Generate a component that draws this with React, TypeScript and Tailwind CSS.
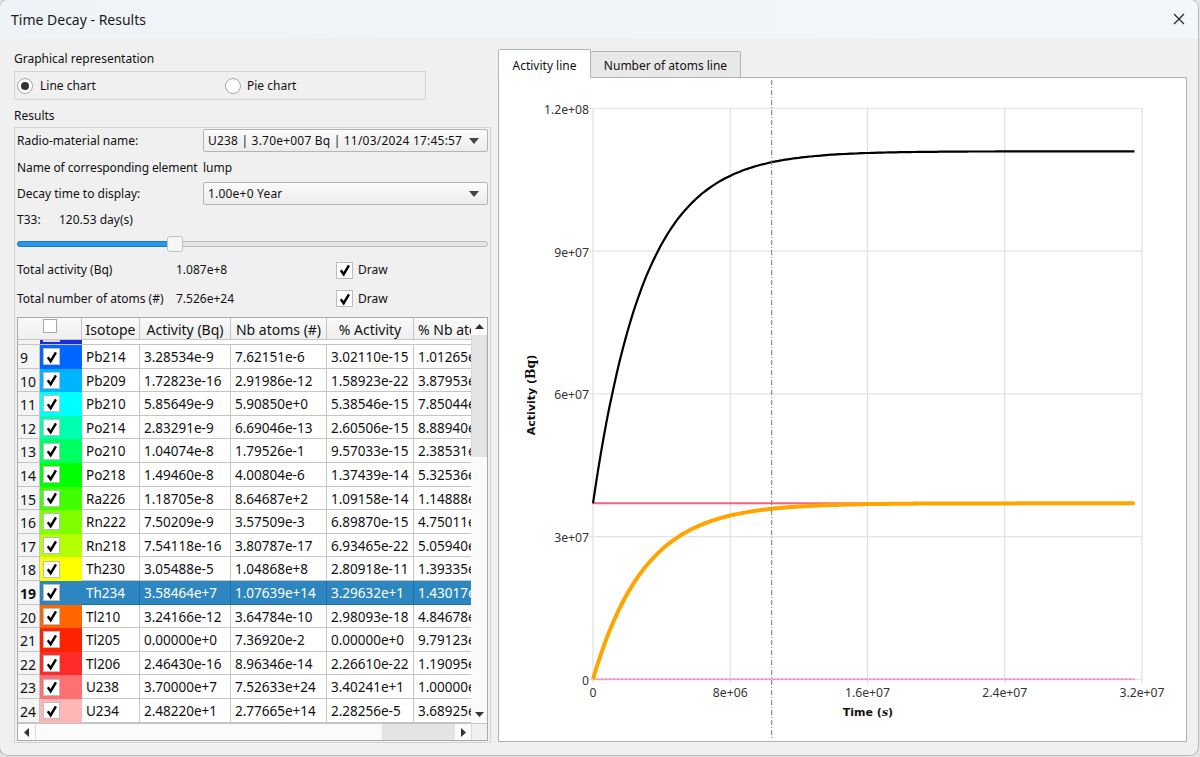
const FONT = "font-['Noto_Sans',sans-serif]";

const rows = [
  ["9", "#0066ff", "Pb214", "3.28534e-9", "7.62151e-6", "3.02110e-15", "1.01265e"],
  ["10", "#00b4ff", "Pb209", "1.72823e-16", "2.91986e-12", "1.58923e-22", "3.87953e"],
  ["11", "#00ffff", "Pb210", "5.85649e-9", "5.90850e+0", "5.38546e-15", "7.85044e"],
  ["12", "#00ffb0", "Po214", "2.83291e-9", "6.69046e-13", "2.60506e-15", "8.88940e"],
  ["13", "#00ff60", "Po210", "1.04074e-8", "1.79526e-1", "9.57033e-15", "2.38531e"],
  ["14", "#00ff00", "Po218", "1.49460e-8", "4.00804e-6", "1.37439e-14", "5.32536e"],
  ["15", "#40ff00", "Ra226", "1.18705e-8", "8.64687e+2", "1.09158e-14", "1.14888e"],
  ["16", "#80ff00", "Rn222", "7.50209e-9", "3.57509e-3", "6.89870e-15", "4.75011e"],
  ["17", "#b4ff00", "Rn218", "7.54118e-16", "3.80787e-17", "6.93465e-22", "5.05940e"],
  ["18", "#ffff00", "Th230", "3.05488e-5", "1.04868e+8", "2.80918e-11", "1.39335e"],
  ["19", "#2e86c1", "Th234", "3.58464e+7", "1.07639e+14", "3.29632e+1", "1.43017e"],
  ["20", "#ff6600", "Tl210", "3.24166e-12", "3.64784e-10", "2.98093e-18", "4.84678e"],
  ["21", "#ff2200", "Tl205", "0.00000e+0", "7.36920e-2", "0.00000e+0", "9.79123e"],
  ["22", "#ff2a2a", "Tl206", "2.46430e-16", "8.96346e-14", "2.26610e-22", "1.19095e"],
  ["23", "#ff7070", "U238", "3.70000e+7", "7.52633e+24", "3.40241e+1", "1.00000e"],
  ["24", "#ffb6b6", "U234", "2.48220e+1", "2.77665e+14", "2.28256e-5", "3.68925e"],
];

const ROW_COLS = "grid grid-cols-[22px_42px_58px_91px_96px_87px_58px]";

function Check() {
  return (
    <div className="flex h-[17px] w-[17px] shrink-0 items-center justify-center border border-[#bdbdbd] bg-white">
      <svg viewBox="0 0 16 16" className="h-[14px] w-[14px]">
        <path d="M3.2 8.2 L6.5 12.8 L12.5 2.8" fill="none" stroke="#000" strokeWidth="2.8" />
      </svg>
    </div>
  );
}

function Combo({ text }: { text: string }) {
  return (
    <div className="flex h-[23px] w-[285px] items-center justify-between rounded-[2px] border border-[#b4b4b4] bg-gradient-to-b from-[#fbfbfb] to-[#ececec] pl-[4px] pr-[8px] text-[12px] tracking-[0.2px] text-[#111]">
      <span>{text}</span>
      <svg viewBox="0 0 10 6" className="h-[6px] w-[10px]">
        <path d="M0 0 H10 L5 6 Z" fill="#444" />
      </svg>
    </div>
  );
}

function TableCell({ text, selected }: { text: string; selected: boolean }) {
  return (
    <div className={`overflow-hidden whitespace-nowrap border-r border-b pl-[4px] leading-[24px] ${selected ? "border-[#1f6ea8] bg-[#2e86c1] text-white" : "border-[#c4c4c4] bg-white text-[#111]"}`}>
      {text}
    </div>
  );
}

function Arrow({ d, w, h }: { d: string; w: string; h: string }) {
  return (
    <svg viewBox="0 0 10 10" className={`${w} ${h}`} preserveAspectRatio="none">
      <path d={d} fill="#333" />
    </svg>
  );
}

function ResultsTable() {
  const heads = ["Isotope", "Activity (Bq)", "Nb atoms (#)", "% Activity"];
  return (
    <div className="mt-[4px] flex h-[424px] w-[471px] flex-col self-start border border-[#a9a9a9] bg-white text-[13.5px]">
      <div className="flex min-h-0 flex-1">
        <div className="min-w-0 flex-1 overflow-hidden">
          <div className={`${ROW_COLS} h-[22px] grid-rows-[22px] border-b border-[#c4c4c4] bg-gradient-to-b from-[#fafafa] to-[#efefef] text-[14px]`}>
            <div />
            <div className="border-r border-[#c4c4c4] pl-[3px] pt-[1px]">
              <div className="h-[14px] w-[14px] border border-[#a8a8a8] bg-white" />
            </div>
            {heads.map((h) => (
              <div key={h} className="overflow-hidden whitespace-nowrap border-r border-[#c4c4c4] text-center leading-[23px] text-[#111]">
                {h}
              </div>
            ))}
            <div className="overflow-hidden whitespace-nowrap pl-[4px] leading-[23px] text-[#111]">% Nb atoms</div>
          </div>
          <div className={`${ROW_COLS} h-[5px] grid-rows-[5px] overflow-hidden border-b border-[#c4c4c4]`}>
            <div className="bg-[#f3f3f3]" />
            <div className="bg-[#1a2be0] pl-[3px]">
              <div className="h-[2px] w-[17px] bg-[#d8d8d8]" />
            </div>
          </div>
          {rows.map(([n, color, iso, a, b, c, d]) => {
            const selected = n === "19";
            return (
              <div key={n} className={`${ROW_COLS} h-[23.6px] grid-rows-[23.6px]`}>
                <div className={`overflow-hidden border-r border-b border-[#c4c4c4] bg-[#f4f4f4] pl-[2px] text-[14px] leading-[25px] text-[#111] ${selected ? "font-bold" : ""}`}>{n}</div>
                <div className="flex items-center pl-[3px]" style={{ background: color }}>
                  <Check />
                </div>
                <TableCell text={iso} selected={selected} />
                <TableCell text={a} selected={selected} />
                <TableCell text={b} selected={selected} />
                <TableCell text={c} selected={selected} />
                <TableCell text={d} selected={selected} />
              </div>
            );
          })}
        </div>
        <div className="flex w-[16px] shrink-0 flex-col bg-[#fbfbfb]">
          <div className="flex h-[17px] items-center justify-center">
            <Arrow d="M0 10 H10 L5 0 Z" w="w-[9px]" h="h-[5px]" />
          </div>
          <div className="h-[122px] border-x border-[#d8d8d8] bg-[#e4e4e4]" />
          <div className="flex-1" />
          <div className="flex h-[17px] items-center justify-center">
            <Arrow d="M0 0 H10 L5 10 Z" w="w-[9px]" h="h-[5px]" />
          </div>
        </div>
      </div>
      <div className="flex h-[17px] shrink-0 items-center border-t border-[#c4c4c4] bg-[#fbfbfb]">
        <div className="flex w-[17px] justify-center">
          <Arrow d="M10 0 V10 L0 5 Z" w="w-[5px]" h="h-[9px]" />
        </div>
        <div className="h-full w-[348px] border-x border-[#e0e0e0]" />
        <div className="h-full w-[72px] bg-[#e4e4e4]" />
        <div className="flex w-[16px] justify-center">
          <Arrow d="M0 0 V10 L10 5 Z" w="w-[5px]" h="h-[9px]" />
        </div>
        <div className="h-full flex-1 border-l border-[#d8d8d8] bg-[#f0f0f0]" />
      </div>
    </div>
  );
}

function LeftPanel() {
  return (
    <div className="flex w-[477px] shrink-0 flex-col pt-[12px] text-[12px] text-[#111]">
      <div className="h-[21px] leading-[18px]">Graphical representation</div>
      <div className="flex h-[29px] w-[412px] items-center border border-[#d4d4d4] pl-[2px]">
        <div className="flex w-[208px] items-center gap-[7px]">
          <div className="flex h-[16px] w-[16px] items-center justify-center rounded-full border border-[#a8a8a8] bg-white">
            <div className="h-[8px] w-[8px] rounded-full bg-[#333]" />
          </div>
          Line chart
        </div>
        <div className="flex items-center gap-[6px]">
          <div className="h-[16px] w-[16px] rounded-full border border-[#a8a8a8] bg-white" />
          Pie chart
        </div>
      </div>
      <div className="mt-[6px] h-[21px] leading-[20px]">Results</div>
      <div className="flex h-[616px] w-[477px] flex-col border border-[#d4d4d4] pl-[2px] pt-[1px]">
        <div className="flex h-[23px] items-center">
          <span className="w-[186px]">Radio-material name:</span>
          <Combo text="U238 | 3.70e+007 Bq | 11/03/2024 17:45:57" />
        </div>
        <div className="mt-[4px] flex h-[23px] items-center">
          <span className="w-[186px] tracking-[-0.1px]">Name of corresponding element</span>
          <span>lump</span>
        </div>
        <div className="mt-[3px] flex h-[23px] items-center">
          <span className="w-[186px]">Decay time to display:</span>
          <Combo text="1.00e+0 Year" />
        </div>
        <div className="mt-[5px] flex h-[20px] items-center">
          <span className="w-[42px]">T33:</span>
          <span>120.53 day(s)</span>
        </div>
        <div className="relative mt-[4px] h-[20px] w-[471px]">
          <div className="absolute left-0 right-0 top-[7px] h-[6px] rounded-[3px] border border-[#b8b8b8] bg-[#e6e6e6]" />
          <div className="absolute left-0 top-[7px] h-[6px] w-[152px] rounded-l-[3px] border border-[#1f78c4] bg-[#2a97e8]" />
          <div className="absolute left-[150px] top-[2px] h-[16px] w-[16px] rounded-[3px] border border-[#c0c0c0] bg-[#f6f6f6]" />
        </div>
        <div className="mt-[2px] flex h-[28px] items-center">
          <span className="w-[159px]">Total activity (Bq)</span>
          <span className="w-[160px]">1.087e+8</span>
          <Check />
          <span className="ml-[5px]">Draw</span>
        </div>
        <div className="flex h-[29px] items-center">
          <span className="w-[159px]">Total number of atoms (#)</span>
          <span className="w-[160px]">7.526e+24</span>
          <Check />
          <span className="ml-[5px]">Draw</span>
        </div>
        <ResultsTable />
      </div>
    </div>
  );
}

// plot area in svg coordinates
const X0 = 94;
const X1 = 643;
const Y0 = 601.3;
const YT = 30.5;
const px = (t: number) => X0 + (t / 3.2e7) * (X1 - X0);
const py = (v: number) => Y0 - (v / 1.2e8) * (Y0 - YT);

function curve(f: (t: number) => number) {
  const pts: string[] = [];
  for (let i = 0; i <= 200; i++) {
    const t = (i / 200) * 3.156e7;
    pts.push(`${px(t).toFixed(1)},${py(f(t)).toFixed(1)}`);
  }
  return "M" + pts.join(" L");
}

function Chart() {
  const tau = 3.0e6;
  const xTicks = [0, 8e6, 1.6e7, 2.4e7, 3.2e7];
  const xLabels = ["0", "8e+06", "1.6e+07", "2.4e+07", "3.2e+07"];
  const yTicks = [0, 3e7, 6e7, 9e7, 1.2e8];
  const yLabels = ["0", "3e+07", "6e+07", "9e+07", "1.2e+08"];
  const tEnd = px(3.156e7);
  return (
    <svg viewBox="0 0 687 663" className="block h-[663px] w-[687px]">
      {xTicks.map((t) => (
        <line key={t} x1={px(t)} x2={px(t)} y1={YT} y2={Y0 + 4} stroke="#e0e0e0" strokeWidth="1.2" />
      ))}
      {yTicks.map((v) => (
        <line key={v} x1={X0 - 4} x2={X1} y1={py(v)} y2={py(v)} stroke="#e4e4e4" strokeWidth="1.2" />
      ))}
      <g fontFamily="'Noto Sans', sans-serif" fontSize="12.2" fill="#333">
        {yTicks.map((v, i) => (
          <text key={v} x={X0 - 4} y={py(v) + 5.5} textAnchor="end">{yLabels[i]}</text>
        ))}
        {xTicks.map((t, i) => (
          <text key={t} x={px(t)} y={Y0 + 18} textAnchor="middle">{xLabels[i]}</text>
        ))}
      </g>
      <g fontFamily="'DejaVu Sans', sans-serif" fontSize="11" fontWeight="bold" fill="#111">
        <text x={369} y={638} textAnchor="middle">
          Time (<tspan fontFamily="'DejaVu Serif', serif" fontStyle="italic">s</tspan>)
        </text>
        <text transform="translate(36 317) rotate(-90)" textAnchor="middle">
          Activity (<tspan fontFamily="'DejaVu Serif', serif" fontSize="12.5">Bq</tspan>)
        </text>
      </g>
      <line x1={X0} x2={tEnd} y1={py(3.7e7)} y2={py(3.7e7)} stroke="#f4607e" strokeWidth="2" />
      <line x1={X0} x2={tEnd} y1={Y0} y2={Y0} stroke="#ffb0c0" strokeWidth="2" />
      <line x1={X0} x2={tEnd} y1={Y0} y2={Y0} stroke="#a0a0e8" strokeWidth="1" strokeDasharray="2 2" />
      <path d={curve((t) => 3.7e7 * (1 - Math.exp(-t / tau)))} fill="none" stroke="#ffa500" strokeWidth="4" />
      <path d={curve((t) => 3.7e7 + 7.4e7 * (1 - Math.exp(-t / tau)))} fill="none" stroke="#000" strokeWidth="2.2" />
      <line x1={272.7} x2={272.7} y1={2} y2={662} stroke="#777" strokeWidth="1" strokeDasharray="5 2 1 2" />
    </svg>
  );
}

function RightPanel() {
  return (
    <div className="ml-[7px] flex w-[689px] shrink-0 flex-col pt-[11px] text-[12px] text-[#111]">
      <div className="relative z-10 flex h-[29px] items-end">
        <div className="flex h-[29px] w-[93px] items-center justify-center rounded-t-[2px] border border-b-0 border-[#b4b4b4] bg-white pt-[4px]">Activity line</div>
        <div className="flex h-[27px] w-[150px] items-center justify-center rounded-t-[2px] border border-l-0 border-[#b4b4b4] bg-[#e8e8e8] pt-[3px]">Number of atoms line</div>
      </div>
      <div className="-mt-px h-[665px] border border-[#b0b0b0] bg-white">
        <Chart />
      </div>
    </div>
  );
}

export default function App() {
  return (
    <div className={`${FONT} h-[757px] w-[1200px] overflow-hidden bg-[#e4e4e4]`}>
      <div className="flex h-[755px] w-[1198px] flex-col overflow-hidden rounded-[8px] bg-[#f0f0f0] shadow-[0_0_0_1px_#b8b8b8]">
        <div className="flex h-[38px] shrink-0 items-center justify-between bg-gradient-to-r from-[#eef3f8] to-[#f3f7fb] pl-[11px] pr-[13px]">
          <span className="text-[14px] text-[#1a1a1a]">Time Decay - Results</span>
          <svg viewBox="0 0 12 12" className="h-[12px] w-[12px]">
            <path d="M1 1 L11 11 M11 1 L1 11" stroke="#222" strokeWidth="1.2" />
          </svg>
        </div>
        <div className="flex flex-1 pl-[14px]">
          <LeftPanel />
          <RightPanel />
        </div>
      </div>
    </div>
  );
}
